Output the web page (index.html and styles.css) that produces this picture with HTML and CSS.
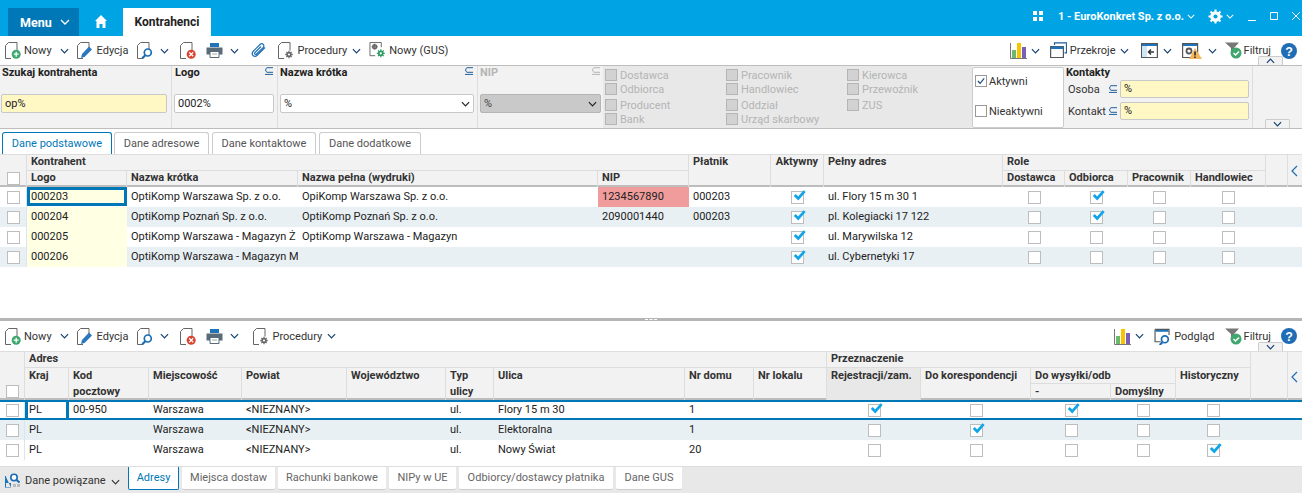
FILE: index.html
```html
<!DOCTYPE html>
<html lang="pl">
<head>
<meta charset="utf-8">
<title>Kontrahenci</title>
<link rel="stylesheet" href="styles.css">
</head>
<body>
<svg class="defs" width="0" height="0" aria-hidden="true">
  <defs>
    <symbol id="chev" viewBox="0 0 10 6"><path d="M1 1l4 4 4-4" fill="none" stroke="currentColor" stroke-width="1.300"/></symbol>
    <symbol id="check" viewBox="0 0 14 14"><path d="M1.500 7l4 4L13 2.500" fill="none" stroke="#10a5e8" stroke-width="3.200"/></symbol>
    <symbol id="doc" viewBox="0 0 16 17"><path d="M3.500.5h8.500v8M3.500.5L.5 3.500v13h5.500" fill="none" stroke="#666" stroke-width="1"/></symbol>
    <symbol id="i-new" viewBox="0 0 16 17"><use href="#doc"/><circle cx="11.200" cy="12.200" r="4.500" fill="#3fa66f"/><path d="M11.200 9.700v5M8.700 12.200h5" stroke="#fff" stroke-width="1.300"/></symbol>
    <symbol id="i-edit" viewBox="0 0 16 17"><use href="#doc"/><path d="M4 16l1-4 7-7.500 3 3-7.500 7.500z" fill="#2a77bd"/></symbol>
    <symbol id="i-find" viewBox="0 0 16 17"><use href="#doc"/><circle cx="10.800" cy="10.500" r="3.500" fill="#fff" stroke="#1a6cb5" stroke-width="1.700"/><path d="M8.300 13.200l-3 3" stroke="#1a6cb5" stroke-width="2.200"/></symbol>
    <symbol id="i-del" viewBox="0 0 16 17"><use href="#doc"/><circle cx="11.200" cy="12.200" r="4.500" fill="#d9432f"/><path d="M9.200 10.200l4 4M13.200 10.200l-4 4" stroke="#fff" stroke-width="1.300"/></symbol>
    <symbol id="i-print" viewBox="0 0 17 16"><path d="M4 .5h9v4H4z" fill="#1f73b8"/><path d="M.5 5h16v7H.5z" fill="#5a6b78"/><path d="M4 9h9v6H4z" fill="#fff" stroke="#5a6b78"/><path d="M6 11.500h5" stroke="#9aa"/></symbol>
    <symbol id="i-clip" viewBox="0 0 17 17"><path d="M15 5.500L7.500 13c-1.500 1.500-3.500 1.500-4.500.5s-1-3 .5-4.500l6.500-6.500c1-1 2.500-1 3.300-.2s.8 2.300-.2 3.300L6.500 12c-.6.600-1.300.600-1.700.2s-.4-1.100.2-1.700L11 4.500" fill="none" stroke="#1c6fb8" stroke-width="1.100"/></symbol>
    <symbol id="i-proc" viewBox="0 0 16 17"><use href="#doc"/><path d="M11 8.800v7.400M7.300 12.500h7.400M8.400 9.900l5.200 5.200M13.600 9.900l-5.200 5.200" stroke="#666" stroke-width="1.300"/><circle cx="11" cy="12.500" r="2.600" fill="#666"/><circle cx="11" cy="12.500" r="1.100" fill="#fff"/></symbol>
    <symbol id="i-gus" viewBox="0 0 17 18"><path d="M6 14.500H.5V.5h12v5" fill="none" stroke="#666"/><circle cx="5.500" cy="5" r="2" fill="none" stroke="#666" stroke-width="1.600"/><path d="M5.500 1.800v6.400M2.300 5h6.400" stroke="#666"/><path d="M12 7.800v8.400M7.800 12h8.400M9 9l6 6M15 9l-6 6" stroke="#2f9c65" stroke-width="1.300"/><circle cx="12" cy="12" r="3" fill="#2f9c65"/><circle cx="12" cy="12" r="1.200" fill="#fff"/></symbol>
    <symbol id="i-chart" viewBox="0 0 17 17"><path d="M.5 1v15.500H17" fill="none" stroke="#777"/><path d="M2 8h4v8H2z" fill="#6cb86c"/><path d="M7 1h4v15H7z" fill="#f7c400"/><path d="M12 5h4v11h-4z" fill="#7b5cb8"/></symbol>
    <symbol id="i-cross" viewBox="0 0 17 17"><path d="M4.500 3V.8h12v10h-2" fill="none" stroke="#1f5f9c" stroke-width="1.200"/><path d="M.6 4.500h12.800v11H.6z" fill="#fff" stroke="#555" stroke-width="1.200"/><path d="M.6 4.500h12.800v2.500H.6z" fill="#1f73b8"/></symbol>
    <symbol id="i-back" viewBox="0 0 17 17"><path d="M.6 1.500h15.800v14H.6z" fill="#fff" stroke="#555" stroke-width="1.200"/><path d="M1 2h15v2H1z" fill="#1f73b8"/><path d="M1 4h5v11H1z" fill="#cfe6f7"/><path d="M13 10H8M10 7.500L7.500 10l2.500 2.500" fill="none" stroke="#333" stroke-width="1.500"/></symbol>
    <symbol id="i-warn" viewBox="0 0 21 17"><path d="M.6 1.500h15v14H.6z" fill="#fff" stroke="#555" stroke-width="1.200"/><path d="M1 2h14v2H1z" fill="#1f73b8"/><circle cx="7" cy="9" r="2.500" fill="none" stroke="#555" stroke-width="1.800"/><path d="M13 6l7 11H7z" fill="#f2b75c"/><path d="M13 9.500v4M13 14.500v1.500" stroke="#222" stroke-width="1.500"/></symbol>
    <symbol id="i-filter" viewBox="0 0 17 17"><path d="M0 .5h14L9 6v3H6V6z" fill="#777"/><circle cx="11" cy="11" r="5.500" fill="#3fa66f"/><path d="M8.500 11l2 2 3.500-3.500" fill="none" stroke="#fff" stroke-width="1.500"/></symbol>
    <symbol id="i-help" viewBox="0 0 16 16"><circle cx="8" cy="8" r="8" fill="#1f6db5"/><text x="8" y="12.500" text-anchor="middle" font-family="Liberation Sans" font-weight="700" font-size="12.500" fill="#fff">?</text></symbol>
    <symbol id="i-view" viewBox="0 0 17 18"><path d="M.6 1.500h14.800v6M.6 1.500v13h6" fill="none" stroke="#555" stroke-width="1.200"/><path d="M1 2h14v2H1z" fill="#1f73b8"/><circle cx="11" cy="12" r="3.600" fill="#fff" stroke="#1a6cb5" stroke-width="1.800"/><path d="M8.500 15l-3 3" stroke="#1a6cb5" stroke-width="2.200"/></symbol>
    <symbol id="i-rel" viewBox="0 0 15 15"><path d="M.5 3v11.500H6M1 10h5v4H1z" fill="#1f73b8"/><path d="M.5 3v11.500" stroke="#1f73b8"/><circle cx="9" cy="4.500" r="3.200" fill="#fff" stroke="#1a6cb5" stroke-width="1.600"/><path d="M11.500 7l3 2.500" stroke="#1a6cb5" stroke-width="2"/><path d="M8 11h3v3H8zM12 11h3v3h-3z" fill="#bbb"/></symbol>
    <symbol id="subset" viewBox="0 0 9 8"><path d="M9 .7H3a2.600 2.600 0 0 0 0 4.600h6M1 7.400h8" fill="none" stroke="currentColor" stroke-width="1"/></symbol>
  </defs>
</svg>

<header class="titlebar">
  <div class="menu">Menu <svg class="ch ch-w"><use href="#chev"/></svg></div>
  <svg class="home" viewBox="0 0 12 13"><path d="M6 0l6 6h-1.500v7H7.500V9h-3v4H1.500V6H0z" fill="#fff"/></svg>
  <div class="doc-tab">Kontrahenci</div>
  <div class="title-right">
    <svg class="apps" viewBox="0 0 10 10"><path d="M0 0h4v4H0zM6 0h4v4H6zM0 6h4v4H0zM6 6h4v4H6z" fill="#fff"/></svg>
    <span class="company">1 - EuroKonkret Sp. z o.o.</span>
    <svg class="ch ch-w ch-thin"><use href="#chev"/></svg>
    <svg class="gear" viewBox="0 0 16 16"><circle cx="8" cy="8" r="4.200" fill="none" stroke="#fff" stroke-width="3"/><path d="M8 .5v15M.5 8h15M2.700 2.700l10.600 10.600M13.300 2.700L2.700 13.300" stroke="#fff" stroke-width="2.200"/><circle cx="8" cy="8" r="2.200" fill="#00a4e4"/></svg>
    <svg class="ch ch-w ch-thin ch-gear"><use href="#chev"/></svg>
    <span class="win-div"></span>
    <svg class="win" viewBox="0 0 10 10"><path d="M1 9.500h8" stroke="#fff"/></svg>
    <svg class="win" viewBox="0 0 10 10"><path d="M1.500 1.500h7v7h-7z" fill="none" stroke="#fff"/></svg>
    <svg class="win" viewBox="0 0 10 10"><path d="M1 1l8 8M9 1l-8 8" stroke="#fff"/></svg>
  </div>
</header>

<div class="toolbar">
  <svg class="ic"><use href="#i-new"/></svg><span class="tt">Nowy</span><svg class="ch m8"><use href="#chev"/></svg>
  <svg class="ic m8"><use href="#i-edit"/></svg><span class="tt tt4">Edycja</span>
  <svg class="ic m9"><use href="#i-find"/></svg><svg class="ch m7"><use href="#chev"/></svg>
  <svg class="ic m11"><use href="#i-del"/></svg>
  <svg class="ic17 m10"><use href="#i-print"/></svg><svg class="ch m7"><use href="#chev"/></svg>
  <svg class="ic17 m11"><use href="#i-clip"/></svg>
  <svg class="ic m11"><use href="#i-proc"/></svg><span class="tt">Procedury</span><svg class="ch m5"><use href="#chev"/></svg>
  <svg class="ic17 m8"><use href="#i-gus"/></svg><span class="tt">Nowy (GUS)</span>
  <div class="tb-right">
    <svg class="ic17"><use href="#i-chart"/></svg><svg class="ch m4"><use href="#chev"/></svg>
    <svg class="ic17 m10"><use href="#i-cross"/></svg><span class="tt">Przekroje</span><svg class="ch m4"><use href="#chev"/></svg>
    <svg class="ic17 m12"><use href="#i-back"/></svg><svg class="ch m5"><use href="#chev"/></svg>
    <svg class="ic21 m10"><use href="#i-warn"/></svg><svg class="ch m5"><use href="#chev"/></svg>
    <svg class="ic17 m8"><use href="#i-filter"/></svg><span class="tt t-filter">Filtruj</span>
    <svg class="ic16 m10"><use href="#i-help"/></svg>
  </div>
  <span class="collapse-tab"><svg class="ch"><use href="#chev"/></svg></span>
</div>

<section class="filters">
  <div class="f f-search"><div class="f-label">Szukaj kontrahenta</div><div class="inp yellow">op%</div></div>
  <div class="f f-logo"><div class="f-label">Logo<svg class="sub"><use href="#subset"/></svg></div><div class="inp">0002%</div></div>
  <div class="f f-name"><div class="f-label">Nazwa krótka<svg class="sub"><use href="#subset"/></svg></div><div class="inp sel">%<svg class="ch"><use href="#chev"/></svg></div></div>
  <div class="f f-nip off"><div class="f-label">NIP<svg class="sub"><use href="#subset"/></svg></div><div class="inp sel dis">%<svg class="ch"><use href="#chev"/></svg></div></div>
  <div class="roles">
    <label class="rl"><i></i>Dostawca</label><label class="rl"><i></i>Pracownik</label><label class="rl"><i></i>Kierowca</label>
    <label class="rl"><i></i>Odbiorca</label><label class="rl"><i></i>Handlowiec</label><label class="rl"><i></i>Przewoźnik</label>
    <label class="rl"><i></i>Producent</label><label class="rl"><i></i>Oddział</label><label class="rl"><i></i>ZUS</label>
    <label class="rl"><i></i>Bank</label><label class="rl"><i></i>Urząd skarbowy</label>
  </div>
  <div class="status">
    <label class="st"><span class="cb dark"><svg viewBox="0 0 11 11"><path d="M2 5.500l2.500 2.500L9 2.500" fill="none" stroke="#1f4f80" stroke-width="1.300"/></svg></span>Aktywni</label>
    <label class="st"><span class="cb dark"></span>Nieaktywni</label>
  </div>
  <div class="contacts">
    <div class="c-title">Kontakty</div>
    <div class="c-row"><span class="c-l">Osoba</span><svg class="sub"><use href="#subset"/></svg><div class="inp yellow">%</div></div>
    <div class="c-row"><span class="c-l">Kontakt</span><svg class="sub"><use href="#subset"/></svg><div class="inp yellow">%</div></div>
  </div>
  <div class="f-end"><span class="expand-tab"><svg class="ch"><use href="#chev"/></svg></span></div>
</section>

<nav class="tabs">
  <span class="tab active t1">Dane podstawowe</span>
  <span class="tab t2">Dane adresowe</span>
  <span class="tab t3">Dane kontaktowe</span>
  <span class="tab t4">Dane dodatkowe</span>
</nav>

<section class="pane-top">
  <div class="ghead g1">
    <div class="h sel-h h-tall"><span class="cb"></span></div>
    <div class="h h-group s4">Kontrahent</div>
    <div class="h h-tall c6">Płatnik</div>
    <div class="h h-tall c7 h-center">Aktywny</div>
    <div class="h h-tall c8">Pełny adres</div>
    <div class="h h-group s-role">Role</div>
    <div class="h h-tall c13"></div>
    <div class="h h-tall c14"><svg class="side" viewBox="0 0 7 12"><path d="M6 1L1 6l5 5" fill="none" stroke="#1f6db5" stroke-width="1.200"/></svg></div>
    <div class="h r2 c2">Logo</div>
    <div class="h r2 c3">Nazwa krótka</div>
    <div class="h r2 c4">Nazwa pełna (wydruki)</div>
    <div class="h r2 c5">NIP</div>
    <div class="h r2 c9">Dostawca</div>
    <div class="h r2 c10">Odbiorca</div>
    <div class="h r2 c11">Pracownik</div>
    <div class="h r2 c12">Handlowiec</div>
  </div>

  <div class="row g1">
    <div class="td tc sel-c"><span class="cb"></span></div><div class="td y current">000203</div><div class="td">OptiKomp Warszawa Sp. z o.o.</div><div class="td">OpiKomp Warszawa Sp. z o.o.</div><div class="td red">1234567890</div><div class="td">000203</div>
    <div class="td tc"><span class="cb on"><svg><use href="#check"/></svg></span></div><div class="td">ul. Flory 15 m 30 1</div>
    <div class="td tc"><span class="cb"></span></div><div class="td tc"><span class="cb on"><svg><use href="#check"/></svg></span></div><div class="td tc"><span class="cb"></span></div><div class="td tc"><span class="cb"></span></div><div class="td sp"></div>
  </div>
  <div class="row g1 alt">
    <div class="td tc sel-c"><span class="cb"></span></div><div class="td y">000204</div><div class="td">OptiKomp Poznań Sp. z o.o.</div><div class="td">OptiKomp Poznań Sp. z o.o.</div><div class="td">2090001440</div><div class="td">000203</div>
    <div class="td tc"><span class="cb on"><svg><use href="#check"/></svg></span></div><div class="td">pl. Kolegiacki 17 122</div>
    <div class="td tc"><span class="cb"></span></div><div class="td tc"><span class="cb on"><svg><use href="#check"/></svg></span></div><div class="td tc"><span class="cb"></span></div><div class="td tc"><span class="cb"></span></div><div class="td sp"></div>
  </div>
  <div class="row g1">
    <div class="td tc sel-c"><span class="cb"></span></div><div class="td y">000205</div><div class="td">OptiKomp Warszawa - Magazyn Ż</div><div class="td">OptiKomp Warszawa - Magazyn</div><div class="td"></div><div class="td"></div>
    <div class="td tc"><span class="cb on"><svg><use href="#check"/></svg></span></div><div class="td">ul. Marywilska 12</div>
    <div class="td tc"><span class="cb"></span></div><div class="td tc"><span class="cb"></span></div><div class="td tc"><span class="cb"></span></div><div class="td tc"><span class="cb"></span></div><div class="td sp"></div>
  </div>
  <div class="row g1 alt">
    <div class="td tc sel-c"><span class="cb"></span></div><div class="td y">000206</div><div class="td">OptiKomp Warszawa - Magazyn M</div><div class="td"></div><div class="td"></div><div class="td"></div>
    <div class="td tc"><span class="cb on"><svg><use href="#check"/></svg></span></div><div class="td">ul. Cybernetyki 17</div>
    <div class="td tc"><span class="cb"></span></div><div class="td tc"><span class="cb"></span></div><div class="td tc"><span class="cb"></span></div><div class="td tc"><span class="cb"></span></div><div class="td sp"></div>
  </div>
</section>

<div class="splitter"><span></span></div>

<div class="toolbar tb2">
  <svg class="ic"><use href="#i-new"/></svg><span class="tt">Nowy</span><svg class="ch m8"><use href="#chev"/></svg>
  <svg class="ic m8"><use href="#i-edit"/></svg><span class="tt tt4">Edycja</span>
  <svg class="ic m9"><use href="#i-find"/></svg><svg class="ch m7"><use href="#chev"/></svg>
  <svg class="ic m11"><use href="#i-del"/></svg>
  <svg class="ic17 m10"><use href="#i-print"/></svg><svg class="ch m7"><use href="#chev"/></svg>
  <svg class="ic m14"><use href="#i-proc"/></svg><span class="tt">Procedury</span><svg class="ch m5"><use href="#chev"/></svg>
  <div class="tb-right">
    <svg class="ic17"><use href="#i-chart"/></svg><svg class="ch m4"><use href="#chev"/></svg>
    <svg class="ic17 m10"><use href="#i-view"/></svg><span class="tt">Podgląd</span>
    <svg class="ic17 m10"><use href="#i-filter"/></svg><span class="tt t-filter">Filtruj</span>
    <svg class="ic16 m10"><use href="#i-help"/></svg>
  </div>
  <span class="collapse-tab down"><svg class="ch"><use href="#chev"/></svg></span>
</div>

<section class="pane-bottom">
  <div class="ghead2 g2">
    <div class="h sel-h2"><span class="cb"></span></div>
    <div class="h h-group s-adres">Adres</div>
    <div class="h h-group s-przez">Przeznaczenie</div>
    <div class="h sp2"></div>
    <div class="h side2"><svg class="side" viewBox="0 0 7 12"><path d="M6 1L1 6l5 5" fill="none" stroke="#1f6db5" stroke-width="1.200"/></svg></div>
    <div class="h b2 k2">Kraj</div>
    <div class="h b2 k3">Kod<br>pocztowy</div>
    <div class="h b2 k4">Miejscowość</div>
    <div class="h b2 k5">Powiat</div>
    <div class="h b2 k6">Województwo</div>
    <div class="h b2 k7">Typ<br>ulicy</div>
    <div class="h b2 k8">Ulica</div>
    <div class="h b2 k9">Nr domu</div>
    <div class="h b2 k10">Nr lokalu</div>
    <div class="h b2 k11 dark">Rejestracji/zam.</div>
    <div class="h b2 k12">Do korespondencji</div>
    <div class="h wys">Do wysyłki/odb</div>
    <div class="h b2 k15">Historyczny</div>
    <div class="h w1">-</div>
    <div class="h w2">Domyślny</div>
  </div>

  <div class="row g2 cur-row">
    <div class="td tc sel-c"><span class="cb"></span></div><div class="td current white">PL</div><div class="td">00-950</div><div class="td">Warszawa</div><div class="td">&lt;NIEZNANY&gt;</div><div class="td"></div><div class="td">ul.</div><div class="td">Flory 15 m 30</div><div class="td">1</div><div class="td"></div>
    <div class="td tc"><span class="cb on"><svg><use href="#check"/></svg></span></div><div class="td tc"><span class="cb"></span></div><div class="td tc"><span class="cb on"><svg><use href="#check"/></svg></span></div><div class="td tc"><span class="cb"></span></div><div class="td tc"><span class="cb"></span></div>
  </div>
  <div class="row g2 alt">
    <div class="td tc sel-c"><span class="cb"></span></div><div class="td">PL</div><div class="td"></div><div class="td">Warszawa</div><div class="td">&lt;NIEZNANY&gt;</div><div class="td"></div><div class="td">ul.</div><div class="td">Elektoralna</div><div class="td">1</div><div class="td"></div>
    <div class="td tc"><span class="cb"></span></div><div class="td tc"><span class="cb on"><svg><use href="#check"/></svg></span></div><div class="td tc"><span class="cb"></span></div><div class="td tc"><span class="cb"></span></div><div class="td tc"><span class="cb"></span></div>
  </div>
  <div class="row g2">
    <div class="td tc sel-c"><span class="cb"></span></div><div class="td">PL</div><div class="td"></div><div class="td">Warszawa</div><div class="td">&lt;NIEZNANY&gt;</div><div class="td"></div><div class="td">ul.</div><div class="td">Nowy Świat</div><div class="td">20</div><div class="td"></div>
    <div class="td tc"><span class="cb"></span></div><div class="td tc"><span class="cb"></span></div><div class="td tc"><span class="cb"></span></div><div class="td tc"><span class="cb"></span></div><div class="td tc"><span class="cb on"><svg><use href="#check"/></svg></span></div>
  </div>
</section>

<footer class="bottombar">
  <svg class="rel" viewBox="0 0 15 15"><use href="#i-rel"/></svg>
  <span class="rel-text">Dane powiązane</span><svg class="ch ch-dark"><use href="#chev"/></svg>
  <div class="btabs">
    <span class="btab active">Adresy</span>
    <span class="btab">Miejsca dostaw</span>
    <span class="btab">Rachunki bankowe</span>
    <span class="btab">NIPy w UE</span>
    <span class="btab">Odbiorcy/dostawcy płatnika</span>
    <span class="btab">Dane GUS</span>
  </div>
</footer>
</body>
</html>
```

FILE: styles.css
```css
* { box-sizing: border-box; }
html, body { margin: 0; padding: 0; }
body {
  width: 1302px; height: 493px; overflow: hidden; background: #fff;
  font-family: Roboto, "Liberation Sans", sans-serif; font-size: 11px; color: #222;
  display: flex; flex-direction: column;
}
.defs { position: absolute; }
svg { display: block; flex: none; }

/* title bar */
.titlebar { height: 36px; background: #00a4e4; display: flex; align-items: flex-end; color: #fff; flex: none; }
.menu { width: 71px; height: 28px; margin-left: 8px; background: #0078b8; font-weight: 700; font-size: 12.5px; display: flex; align-items: center; padding-left: 12px; gap: 8px; }
.home { width: 12px; height: 13px; margin: 0 16px 8px 16px; }
.doc-tab { width: 88px; height: 28px; background: #fff; color: #222; font-weight: 700; font-size: 12px; display: flex; align-items: center; justify-content: center; }
.title-right { margin-left: auto; height: 36px; display: flex; align-items: center; width: 269px; padding-bottom: 4px; }
.apps { width: 10px; height: 10px; }
.company { font-weight: 700; font-size: 11px; margin-left: 15px; white-space: nowrap; }
.gear { width: 15px; height: 15px; margin-left: 13px; }
.ch-gear { margin-left: 3px !important; }
.ch { width: 9px; height: 6px; color: #123f70; }
.ch-w { color: #fff; width: 10px; height: 6px; }
.ch-thin { width: 8px; height: 5px; margin-left: 3px; }
.win-div { width: 1px; height: 36px; background: #0a93cc; margin: 0 6px 0 7px; position: relative; top: 2px; }
.win { width: 10px; height: 10px; margin-right: 12px; }

/* toolbars */
.toolbar { height: 29px; flex: none; display: flex; align-items: center; padding-left: 5px; position: relative; }
.tb2 { height: 30px; }
.ic { width: 16px; height: 17px; }
.ic17 { width: 17px; height: 17px; }
.ic21 { width: 21px; height: 17px; }
.ic16 { width: 16px; height: 16px; }
.tt { margin-left: 3px; font-size: 11px; white-space: nowrap; color: #333; }
.tt4 { margin-left: 4px; }
.m4 { margin-left: 4px; } .m5 { margin-left: 5px; } .m7 { margin-left: 7px; } .m8 { margin-left: 8px; } .m9 { margin-left: 9px; }
.m10 { margin-left: 10px; } .m11 { margin-left: 11px; } .m12 { margin-left: 12px; } .m14 { margin-left: 14px; }
.tb-right { margin-left: auto; display: flex; align-items: center; padding-right: 5px; }
.t-filter { margin-left: 2px; }
.collapse-tab { position: absolute; right: 19px; bottom: 0; width: 25px; height: 9px; background: #f2f2f2; border: 1px solid #ccc; border-bottom: 0; border-radius: 2px 2px 0 0; display: flex; justify-content: center; align-items: center; }
.collapse-tab .ch { transform: rotate(180deg); }
.collapse-tab.down .ch { transform: none; }

/* filters */
.filters { height: 64px; flex: none; display: flex; background: #f2f2f2; border-top: 1px solid #bdbdbd; border-bottom: 1px solid #bdbdbd; }
.f { border-right: 1px solid #ddd; padding: 0 2px; position: relative; }
.f-label { font-weight: 700; font-size: 11px; height: 28px; display: flex; justify-content: space-between; line-height: 14px; }
.f-search { width: 172px; padding-left: 1px; padding-right: 4px; }
.f-search .f-label { padding-left: 1px; }
.f-logo { width: 106px; padding-left: 2px; padding-right: 3px; }
.f-name { width: 200px; padding-left: 2px; padding-right: 3px; }
.f-nip { width: 125px; padding-left: 2px; padding-right: 2px; border-right: 0; }
.f .f-label .sub { margin: 1px 1px 0 0; }
.sub { width: 9px; height: 8px; color: #1f5f9c; }
.f-logo .f-label { padding-left: 1px; }
.off .f-label, .off { color: #b5b5b5; }
.off .sub { color: #b5b5b5; }
.inp { height: 19px; border: 1px solid #c8c8c8; border-radius: 2px; background: #fff; font-size: 11px; line-height: 17px; padding-left: 3px; color: #222; }
.yellow { background: #fff8c5; }
.sel { display: flex; align-items: center; justify-content: space-between; padding-right: 3px; }
.sel .ch { color: #222; }
.dis { background: #c9c9c9; border-color: #b5b5b5; color: #444; }
.roles { width: 369px; background: #e8e8e8; display: grid; grid-template-columns: 121px 121px 1fr; padding: 2px 0 0 2px; align-content: start; grid-template-rows: 14px 14px 16px 14px; }
.rl { display: flex; align-items: center; gap: 3px; color: #b4b4b4; font-size: 11px; white-space: nowrap; }
.rl:nth-child(n+7):nth-child(-n+9) { margin-top: 2px; }
.rl i { width: 12px; height: 12px; border: 1px solid #b5b5b5; background: #d2d2d2; flex: none; }
.status { width: 92px; height: 61px; margin-top: 1px; background: #fff; border: 1px solid #ccc; border-radius: 2px; padding: 2px 0 0 2px; }
.st { display: flex; align-items: center; gap: 2px; color: #333; font-size: 11px; }
.st:first-child { height: 22px; }
.st:last-child { margin-top: 8px; height: 22px; }
.contacts { width: 189px; padding: 0 2px 0 2px; border-right: 1px solid #ddd; }
.c-title { font-weight: 700; font-size: 11px; line-height: 14px; height: 12px; }
.c-row { display: flex; align-items: center; height: 22px; }
.c-row .inp { width: 129px; height: 18px; line-height: 16px; margin-left: 3px; }
.c-l { width: 42px; padding-left: 2px; color: #333; }
.f-end { flex: 1; display: flex; justify-content: center; align-items: flex-end; }
.expand-tab { width: 25px; height: 9px; background: #f2f2f2; border: 1px solid #ccc; border-bottom: 0; border-radius: 2px 2px 0 0; display: flex; justify-content: center; align-items: center; }

/* tabs */
.tabs { height: 25px; padding: 3px 0 0 2px; display: flex; flex: none; }
.tab { height: 22px; border: 1px solid #ccc; border-bottom: 0; border-radius: 3px 3px 0 0; color: #555; display: flex; align-items: center; justify-content: center; font-size: 11px; white-space: nowrap; }
.tab.active { border: 1px solid #0078b8; border-bottom: 0; color: #0078b8; background: #fff; }
.t1 { width: 110px; } .t2 { width: 95px; margin-left: 2px; } .t3 { width: 104px; margin-left: 3px; } .t4 { width: 102px; margin-left: 3px; }

/* grids */
.g1 { display: grid; grid-template-columns: 27px 100px 171px 300px 91px 82px 53px 179px 62px 63px 63px 75px 22px 14px; }
.g2 { display: grid; grid-template-columns: 25px 44px 80px 93px 105px 99px 48px 191px 69px 73px 94px 110px 80px 65px 75px 37px 14px; }
.pane-top { height: 165px; flex: none; }
.ghead { grid-template-rows: 16px 16px; background: #f2f2f2; border-top: 1px solid #ddd; border-bottom: 2px solid #bdbdbd; height: 33px; }
.h { font-weight: 700; font-size: 11px; line-height: 14px; padding: 0 4px; border-right: 1px solid #ddd; white-space: nowrap; overflow: hidden; color: #333; }
.h-group { border-bottom: 1px solid #ddd; }
.h-tall { grid-row: 1 / span 2; }
.sel-h { grid-column: 1; display: flex; align-items: flex-end; justify-content: center; padding: 0 0 2px; }
.s4 { grid-column: 2 / span 4; grid-row: 1; }
.c6 { grid-column: 6; } .c7 { grid-column: 7; } .c8 { grid-column: 8; }
.h-center { text-align: center; padding: 0; }
.s-role { grid-column: 9 / span 4; grid-row: 1; }
.c13 { grid-column: 13; } .c14 { grid-column: 14; border-right: 0; padding: 10px 0 0 3px; }
.r2 { grid-row: 2; }
.c2 { grid-column: 2; } .c3 { grid-column: 3; } .c4 { grid-column: 4; } .c5 { grid-column: 5; }
.c9 { grid-column: 9; } .c10 { grid-column: 10; } .c11 { grid-column: 11; } .c12 { grid-column: 12; }
.side { width: 7px; height: 12px; }

.row { height: 20px; }
.alt { background: #e9f0f4; }
.td { height: 100%; padding: 0 4px; line-height: 19px; font-size: 11px; white-space: nowrap; overflow: hidden; color: #222; min-width: 0; }
.tc { display: flex; align-items: center; justify-content: center; padding: 0; overflow: visible; }
.sel-c { border-right: 1px solid #d6e6f2; background: #fff; }
.alt .sel-c { background: transparent; }
.y { background: #ffffe4; }
.red { background: #f09c9c; }
.current { border: 3px solid #0078b8; line-height: 13px; padding: 0 1px; height: 19px; }
.cb { width: 13px; height: 13px; border: 1px solid #bdbdbd; background: #fff; display: block; position: relative; flex: none; }
.cb.on svg { position: absolute; width: 13px; height: 12px; left: 1px; top: -3px; }
.cb.dark { border-color: #999; width: 12px; height: 12px; }
.cb.dark svg { width: 10px; height: 10px; }

.splitter { height: 3px; background: #b5b5b5; flex: none; margin-top: -1px; display: flex; justify-content: center; }
.splitter span { width: 12px; height: 1px; margin-top: 1px; border-top: 1px dashed #fff; }

.pane-bottom { height: 115px; flex: none; }
.ghead2 { grid-template-rows: 16px 16px 16px; height: 49px; background: #f2f2f2; border-top: 1px solid #ddd; border-bottom: 2px solid #bdbdbd; }
.sel-h2 { grid-column: 1; grid-row: 1 / span 3; display: flex; align-items: flex-end; justify-content: center; padding: 0 0 2px; }
.s-adres { grid-column: 2 / span 9; grid-row: 1; }
.s-przez { grid-column: 11 / span 5; grid-row: 1; }
.sp2 { grid-column: 16; grid-row: 1 / span 3; }
.side2 { grid-column: 17; grid-row: 1 / span 3; border-right: 0; padding: 19px 0 0 3px; }
.b2 { grid-row: 2 / span 2; line-height: 16px; }
.k2 { grid-column: 2; } .k3 { grid-column: 3; } .k4 { grid-column: 4; } .k5 { grid-column: 5; } .k6 { grid-column: 6; } .k7 { grid-column: 7; }
.k8 { grid-column: 8; } .k9 { grid-column: 9; } .k10 { grid-column: 10; } .k11 { grid-column: 11; } .k12 { grid-column: 12; } .k15 { grid-column: 15; }
.k11.dark { background: #e8e8e8; }
.wys { grid-column: 13 / span 2; grid-row: 2; border-bottom: 1px solid #ddd; line-height: 15px; }
.w1 { grid-column: 13; grid-row: 3; line-height: 15px; }
.w2 { grid-column: 14; grid-row: 3; line-height: 15px; }
.cur-row { height: 20px; border-top: 2px solid #0078b8; border-bottom: 2px solid #0078b8; }
.cur-row .td { line-height: 16px; }
.cur-row .current { border-width: 0 3px; padding: 0 1px; height: 16px; }

/* bottom bar */
.bottombar { height: 28px; flex: none; background: #e8e8e8; border-top: 1px solid #ddd; display: flex; align-items: flex-start; }
.rel { width: 15px; height: 15px; margin: 6px 0 0 5px; }
.rel-text { margin: 7px 0 0 5px; font-size: 11px; color: #333; white-space: nowrap; }
.ch-dark { margin: 12px 0 0 5px; color: #333; }
.btabs { display: flex; margin-left: auto; width: 1174px; }
.btab { height: 23px; background: #fff; border-radius: 0 0 2px 2px; border-bottom: 1px solid #ccc; color: #666; font-size: 11px; padding-bottom: 2px; display: flex; align-items: center; justify-content: center; white-space: nowrap; margin-right: 3px; }
.btab.active { color: #0078b8; border: 1px solid #0078b8; border-top: 0; width: 51px; }
.btab:nth-child(2) { width: 93px; } .btab:nth-child(3) { width: 108px; } .btab:nth-child(4) { width: 67px; } .btab:nth-child(5) { width: 154px; } .btab:nth-child(6) { width: 66px; }
```
